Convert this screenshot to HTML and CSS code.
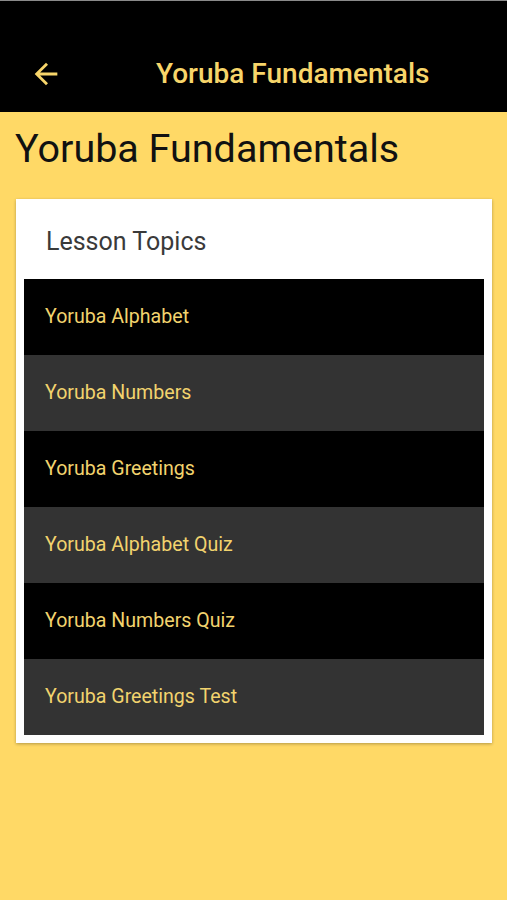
FILE: index.html
```html
<!DOCTYPE html>
<html lang="en">
<head>
    <meta charset="UTF-8">
    <meta name="viewport" content="width=device-width, initial-scale=1.0">
    <title>Yoruba Fundamentals</title>
    <link rel="stylesheet" href="styles.css">
</head>
<body>
    <header class="top-bar">
        <button class="back-btn" aria-label="Back">
            <svg viewBox="0 0 24 24" width="34" height="34">
                <path fill="currentColor" d="M20 11H7.83l5.59-5.59L12 4l-8 8 8 8 1.41-1.41L7.83 13H20v-2z"/>
            </svg>
        </button>
        <div class="bar-title">Yoruba Fundamentals</div>
    </header>

    <main class="content">
        <h1 class="page-title">Yoruba Fundamentals</h1>

        <div class="card">
            <h2 class="card-title">Lesson Topics</h2>
            <ul class="topics">
                <li class="topic">Yoruba Alphabet</li>
                <li class="topic">Yoruba Numbers</li>
                <li class="topic">Yoruba Greetings</li>
                <li class="topic">Yoruba Alphabet Quiz</li>
                <li class="topic">Yoruba Numbers Quiz</li>
                <li class="topic">Yoruba Greetings Test</li>
            </ul>
        </div>
    </main>
</body>
</html>
```

FILE: styles.css
```css
body {
    margin: 0;
    font-family: Roboto, "Liberation Sans", sans-serif;
    background-color: #ffd966;
    min-height: 900px;
}
.top-bar {
    display: flex;
    align-items: center;
    height: 112px;
    background-color: #000;
    border-top: 1px solid #8a8a8a;
    color: #f7d56a;
    padding-top: 34px;
    box-sizing: border-box;
}
.back-btn {
    display: flex;
    background: none;
    border: none;
    color: #f7d56a;
    padding: 0;
    margin-left: 29px;
    cursor: pointer;
}
.bar-title {
    margin-left: 93px;
    font-size: 28px;
    font-weight: 500;
}
.content {
    padding: 14px 15px 0 16px;
}
.page-title {
    margin: 0;
    font-size: 39.5px;
    font-weight: 400;
    color: #111;
    line-height: 46px;
    margin-left: -1px;
}
.card {
    margin-top: 27px;
    background-color: #fff;
    padding: 0 8px 8px 8px;
    box-shadow: 0 1px 3px rgba(0, 0, 0, 0.3);
}
.card-title {
    margin: 0;
    padding: 0 0 0 22px;
    height: 80px;
    line-height: 86px;
    font-size: 25px;
    font-weight: 400;
    color: #3a3a3a;
}
.topics {
    list-style: none;
    margin: 0;
    padding: 0;
}
.topic {
    height: 76px;
    line-height: 76px;
    padding-left: 21px;
    font-size: 19.6px;
    color: #f2d36e;
    background-color: #000;
}
.topic:nth-child(even) {
    background-color: #333;
}
```
